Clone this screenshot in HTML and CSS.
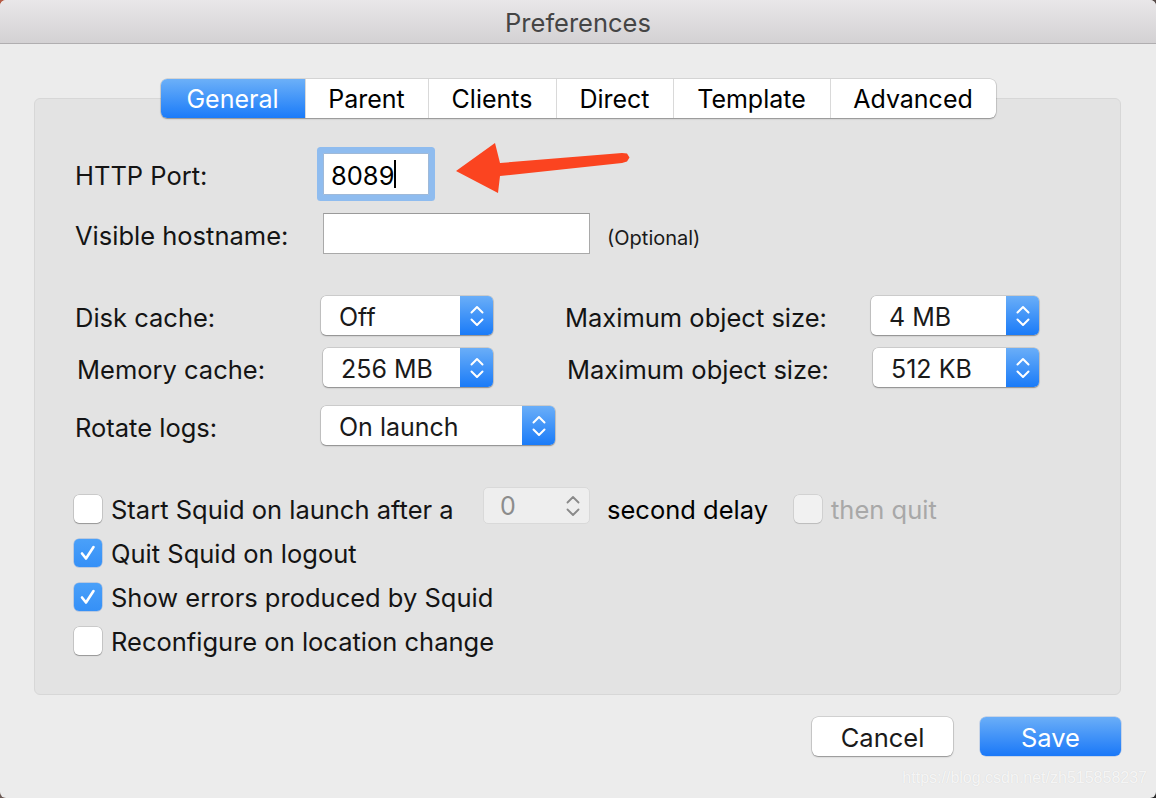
FILE: index.html
```html
<!DOCTYPE html>
<html>
<head>
<meta charset="utf-8">
<title>Preferences</title>
<link rel="stylesheet" href="styles.css">
</head>
<body>
<div class="window">
  <header class="titlebar">Preferences</header>
  <main class="content">
    <nav class="tabs">
      <div class="tab active">General</div>
      <div class="tab">Parent</div>
      <div class="tab">Clients</div>
      <div class="tab">Direct</div>
      <div class="tab">Template</div>
      <div class="tab">Advanced</div>
    </nav>
    <section class="group">
      <div class="row row-port">
        <span class="lbl col-a">HTTP Port:</span>
        <div class="field port"><span class="field-text">8089</span><span class="caret"></span></div>
      </div>
      <div class="row row-host">
        <span class="lbl col-a">Visible hostname:</span>
        <div class="field host"></div>
        <span class="hint">(Optional)</span>
      </div>
      <div class="row row-pop first">
        <span class="lbl col-b">Disk cache:</span>
        <div class="popup w172"><span class="val">Off</span><span class="stp"><svg viewBox="0 0 14 26" width="14" height="26"><path d="M1.5 9.5 L7 4 L12.5 9.5 M1.5 16.5 L7 22 L12.5 16.5"/></svg></span></div>
        <span class="lbl col-c">Maximum object size:</span>
        <div class="popup w168"><span class="val">4 MB</span><span class="stp"><svg viewBox="0 0 14 26" width="14" height="26"><path d="M1.5 9.5 L7 4 L12.5 9.5 M1.5 16.5 L7 22 L12.5 16.5"/></svg></span></div>
      </div>
      <div class="row row-pop second">
        <span class="lbl col-b">Memory cache:</span>
        <div class="popup w170"><span class="val">256 MB</span><span class="stp"><svg viewBox="0 0 14 26" width="14" height="26"><path d="M1.5 9.5 L7 4 L12.5 9.5 M1.5 16.5 L7 22 L12.5 16.5"/></svg></span></div>
        <span class="lbl col-c gap74">Maximum object size:</span>
        <div class="popup w166"><span class="val">512 KB</span><span class="stp"><svg viewBox="0 0 14 26" width="14" height="26"><path d="M1.5 9.5 L7 4 L12.5 9.5 M1.5 16.5 L7 22 L12.5 16.5"/></svg></span></div>
      </div>
      <div class="row row-pop third">
        <span class="lbl col-b">Rotate logs:</span>
        <div class="popup w234"><span class="val">On launch</span><span class="stp"><svg viewBox="0 0 14 26" width="14" height="26"><path d="M1.5 9.5 L7 4 L12.5 9.5 M1.5 16.5 L7 22 L12.5 16.5"/></svg></span></div>
      </div>
      <div class="row row-check first-check">
        <span class="cb"></span>
        <span class="lbl start-text">Start Squid on launch after a</span>
        <div class="stepper"><span class="step-val">0</span><svg viewBox="0 0 14 26" width="14" height="26"><path d="M1.5 9.5 L7 4 L12.5 9.5 M1.5 16.5 L7 22 L12.5 16.5"/></svg></div>
        <span class="lbl delay-text">second delay</span>
        <span class="cb disabled"></span>
        <span class="lbl dim">then quit</span>
      </div>
      <div class="row row-check">
        <span class="cb on"><svg viewBox="0 0 28 28" width="28" height="28"><path d="M8 14.5 L12 19.5 L19.5 8"/></svg></span>
        <span class="lbl">Quit Squid on logout</span>
      </div>
      <div class="row row-check">
        <span class="cb on"><svg viewBox="0 0 28 28" width="28" height="28"><path d="M8 14.5 L12 19.5 L19.5 8"/></svg></span>
        <span class="lbl">Show errors produced by Squid</span>
      </div>
      <div class="row row-check">
        <span class="cb"></span>
        <span class="lbl">Reconfigure on location change</span>
      </div>
    </section>
    <footer class="buttons">
      <button class="btn cancel">Cancel</button>
      <button class="btn save">Save</button>
    </footer>
  </main>
  <svg class="arrow" viewBox="0 0 185 60" width="185" height="60"><polygon points="6,33 45,5 50,25 172,15 177,15.5 179.5,19.5 177,23.5 172,25 50,38 48,55"/></svg>
  <div class="watermark">https://blog.csdn.net/zh515858237</div>
</div>
</body>
</html>
```

FILE: styles.css
```css
html, body {
  margin: 0;
  padding: 0;
}
body {
  width: 1156px;
  height: 798px;
  background: linear-gradient(135deg, #b65a44 0%, #6b5a55 40%, #2b2b2b 100%);
  font-family: Inter, "Liberation Sans", Arial, sans-serif;
  overflow: hidden;
}
.window {
  position: relative;
  width: 1156px;
  height: 798px;
  background: #ececec;
  border-radius: 6px;
  overflow: hidden;
  display: flex;
  flex-direction: column;
}
.titlebar {
  box-sizing: border-box;
  height: 44px;
  padding-top: 2px;
  border-bottom: 1px solid #b0aeb0;
  background: linear-gradient(#e9e7e9, #d3d1d3);
  display: flex;
  align-items: center;
  justify-content: center;
  font-size: 25.5px;
  color: #454545;
  flex: none;
}
.content {
  padding: 35px 35px 0 34px;
  display: flex;
  flex-direction: column;
}
.tabs {
  align-self: center;
  display: grid;
  grid-template-columns: 144px 123px 128px 117px 157px 166px;
  height: 39px;
  margin-bottom: -20px;
  margin-left: 1px;
  position: relative;
  z-index: 1;
  background: #fff;
  border-radius: 6px;
  box-shadow: 0 0 0 0.5px rgba(0,0,0,0.18), 0 1px 1.5px rgba(0,0,0,0.3);
}
.tab {
  display: flex;
  align-items: center;
  justify-content: center;
  font-size: 25px;
  color: #000;
  border-left: 1px solid #d9d9d9;
  padding-top: 1px;
}
.tab:first-child { border-left: none; }
.tab.active {
  background: linear-gradient(#6cb0f8, #1a7bf9);
  color: #fff;
  border-radius: 6px 0 0 6px;
}
.group {
  box-sizing: border-box;
  height: 597px;
  background: #e3e3e3;
  border: 1px solid #d7d7d7;
  border-radius: 6px;
  padding: 48px 0 0 40px;
  display: flex;
  flex-direction: column;
}
.row {
  display: flex;
  align-items: center;
}
.lbl {
  font-size: 25.5px;
  color: #141414;
  white-space: nowrap;
  padding-top: 3px;
}
.col-a { width: 248px; flex: none; }
.col-b { width: 246px; flex: none; }
.col-c { width: 306px; flex: none; margin-left: 72px; }
.col-c.gap74 { margin-left: 74px; }
.row-port { height: 54px; }
.field {
  box-sizing: border-box;
  background: #fff;
  border: 1px solid #a9a9a9;
}
.field.port {
  width: 106px;
  height: 42px;
  border-color: #9fb9d8;
  box-shadow: 0 0 0 6px #8fbcef;
  border-radius: 1px;
  display: flex;
  align-items: center;
  padding-left: 7px;
}
.field-text {
  font-size: 25.5px;
  color: #000;
  padding-top: 2px;
}
.caret {
  width: 2px;
  height: 28px;
  background: #000;
  margin-left: 0;
}
.row-host {
  height: 41px;
  margin-top: 12px;
}
.field.host {
  width: 267px;
  height: 41px;
  border-top-color: #9a9a9a;
}
.hint {
  font-size: 20px;
  color: #1a1a1a;
  margin-left: 17px;
  margin-top: 8px;
}
.row-pop { height: 39px; }
.row-pop.first { margin-top: 42px; }
.row-pop.second { margin-top: 13px; padding-left: 2px; }
.row-pop.third { margin-top: 19px; }
.popup {
  box-sizing: border-box;
  height: 39px;
  display: flex;
  background: #fff;
  border-radius: 5px;
  box-shadow: 0 0 0 0.5px rgba(0,0,0,0.2), 0 1px 1.5px rgba(0,0,0,0.32);
  flex: none;
}
.w172 { width: 172px; }
.w170 { width: 170px; }
.w168 { width: 168px; }
.w166 { width: 166px; }
.w234 { width: 234px; }
.popup .val {
  flex: 1;
  display: flex;
  align-items: center;
  padding-left: 18px;
  padding-top: 2px;
  font-size: 25px;
  color: #1a1a1a;
}
.popup .stp {
  width: 33px;
  flex: none;
  background: linear-gradient(#6aaef8, #1a7bf8);
  border-radius: 0 5px 5px 0;
  display: flex;
  align-items: center;
  justify-content: center;
}
.stp svg path {
  fill: none;
  stroke: #fff;
  stroke-width: 2;
  stroke-linecap: round;
  stroke-linejoin: round;
}
.row-check { height: 44px; }
.row-check .lbl { padding-top: 0; }
.row-check.first-check { margin-top: 42px; }
.cb {
  box-sizing: border-box;
  width: 28px;
  height: 28px;
  flex: none;
  margin-left: -1px;
  margin-right: 9px;
  background: #fff;
  border-radius: 5px;
  box-shadow: 0 0 0 0.5px rgba(0,0,0,0.22), 0 1px 1px rgba(0,0,0,0.25);
  display: flex;
}
.cb.on {
  background: linear-gradient(#4aa0f9, #3590f7);
  box-shadow: 0 0 0 0.5px rgba(0,80,200,0.35);
}
.cb.on svg path {
  fill: none;
  stroke: #fff;
  stroke-width: 2.6;
  stroke-linecap: round;
  stroke-linejoin: round;
}
.cb.disabled {
  background: #f1f1f1;
  box-shadow: 0 0 0 0.5px rgba(0,0,0,0.15), 0 1px 1px rgba(0,0,0,0.1);
  margin-left: 0;
}
.start-text { width: 372px; flex: none; }
.stepper {
  box-sizing: border-box;
  width: 107px;
  height: 37px;
  margin-bottom: 7px;
  background: #eeeeee;
  border: 1px solid #d9d9d9;
  border-radius: 5px;
  display: flex;
  align-items: center;
  justify-content: space-between;
  padding: 0 9px 0 16px;
  flex: none;
}
.step-val {
  font-size: 25px;
  color: #8c8c8c;
}
.stepper svg path {
  fill: none;
  stroke: #8a8a8a;
  stroke-width: 1.8;
  stroke-linecap: round;
  stroke-linejoin: round;
}
.delay-text {
  width: 187px;
  flex: none;
  margin-left: 17px;
  color: #000;
}
.dim { color: #a8a8a8; }
.buttons {
  display: flex;
  justify-content: flex-end;
  gap: 27px;
  margin-top: 22px;
  padding-right: 0;
}
.btn {
  width: 141px;
  height: 39px;
  border: none;
  border-radius: 6px;
  font-family: inherit;
  font-size: 25.5px;
  padding: 2px 0 0;
}
.btn.cancel {
  background: #fff;
  color: #1a1a1a;
  box-shadow: 0 0 0 0.5px rgba(0,0,0,0.22), 0 1px 1.5px rgba(0,0,0,0.3);
}
.btn.save {
  background: linear-gradient(#6aaef8, #1a78f8);
  color: #fff;
  box-shadow: 0 0 0 0.5px rgba(0,80,200,0.3);
}
.arrow {
  position: absolute;
  left: 450px;
  top: 138px;
}
.arrow polygon {
  fill: #fb4420;
}
.watermark {
  position: absolute;
  right: 9px;
  bottom: 11px;
  font-family: "Liberation Sans", Arial, sans-serif;
  font-size: 16px;
  color: rgba(255,255,255,0.8);
  text-shadow: 0 0 1px rgba(0,0,0,0.12);
}
```
